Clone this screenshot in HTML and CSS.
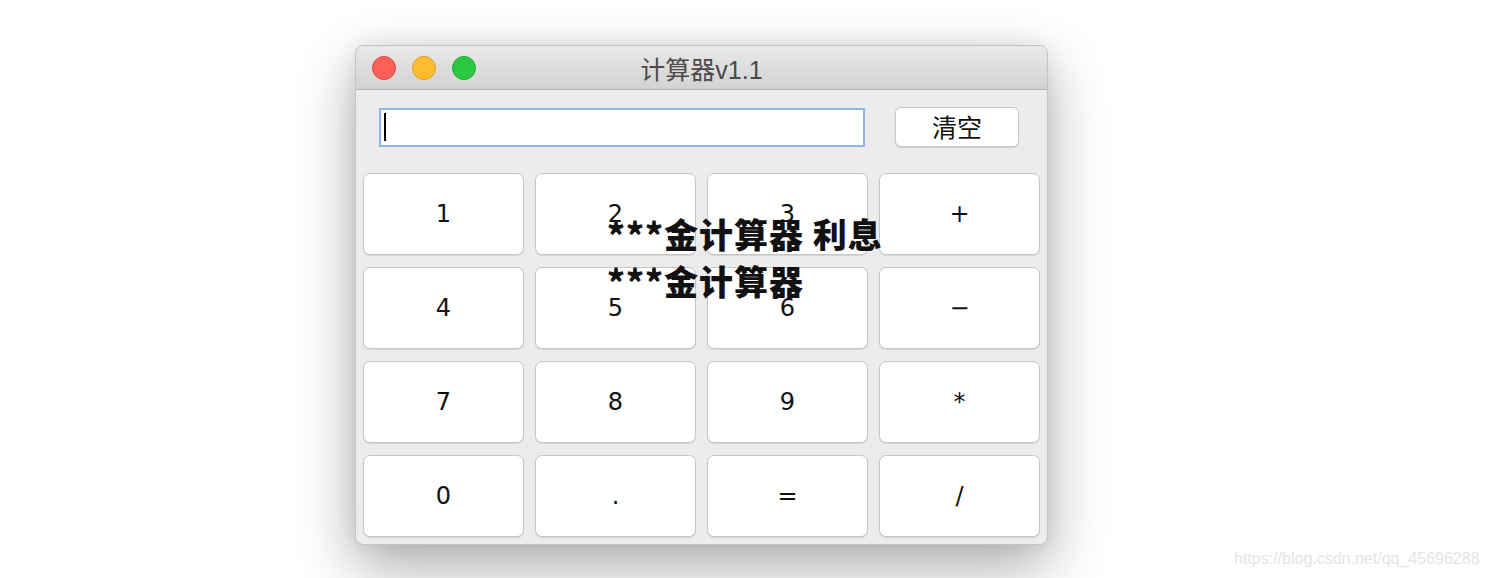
FILE: index.html
```html
<!DOCTYPE html>
<html lang="zh-CN">
<head>
  <meta charset="UTF-8" />
  <title>计算器v1.1</title>
  <link rel="stylesheet" href="styles.css">
</head>
<body>
  <div class="stage">
    <div class="window">
      <div class="titlebar">
        <div class="lights">
          <span class="light red"></span>
          <span class="light yellow"></span>
          <span class="light green"></span>
        </div>
        <div class="title">计算器v1.1</div>
      </div>
      <div class="content">
        <div class="toprow">
          <div class="display"><span class="caret"></span></div>
          <button class="clear">清空</button>
        </div>
        <div class="keys">
          <button class="key">1</button>
          <button class="key">2</button>
          <button class="key">3</button>
          <button class="key">+</button>
          <button class="key">4</button>
          <button class="key">5</button>
          <button class="key">6</button>
          <button class="key">&minus;</button>
          <button class="key">7</button>
          <button class="key">8</button>
          <button class="key">9</button>
          <button class="key">*</button>
          <button class="key">0</button>
          <button class="key">.</button>
          <button class="key">=</button>
          <button class="key">/</button>
        </div>
      </div>
    </div>
    <div class="caption">***金计算器 利息<br>***金计算器</div>
  </div>
  <div class="watermark">https://blog.csdn.net/qq_45696288</div>
</body>
</html>
```

FILE: styles.css
```css
* { box-sizing: border-box; margin: 0; padding: 0; }
html, body { width: 100%; height: 100%; overflow: hidden; }
body {
  background: #fff;
  font-family: "Liberation Sans", "Noto Sans CJK SC", sans-serif;
  position: relative;
}
.stage { position: relative; padding: 45px 0 0 355px; }
.window {
  width: 693px; height: 500px;
  background: #ececec;
  border: 1px solid #c4c4c4;
  border-radius: 8px;
  box-shadow: 0 22px 60px rgba(0, 0, 0, 0.33), 0 0 20px rgba(0, 0, 0, 0.08);
  overflow: hidden;
}
.titlebar {
  height: 44px;
  background: linear-gradient(#e9e9e9, #d2d2d2);
  border-bottom: 1px solid #b4b4b4;
  display: flex; align-items: center;
  position: relative;
}
.lights { display: flex; gap: 16px; padding-left: 16px; }
.light { width: 24px; height: 24px; border-radius: 50%; display: block; }
.red { background: #fe5f57; border: 1px solid #e0443e; }
.yellow { background: #febc2e; border: 1px solid #dea123; }
.green { background: #28c840; border: 1px solid #1aab29; }
.title {
  position: absolute; left: 0; right: 0; top: 0; bottom: 0;
  display: flex; justify-content: center; align-items: center;
  font-size: 25px; color: #4a4a4a;
  font-family: "Liberation Sans", "Noto Sans CJK SC", sans-serif;
}
.content { padding: 17px 7px 0 7px; }
.toprow { display: flex; align-items: center; padding-left: 16px; height: 40px; }
.display {
  width: 486px; height: 39px;
  background: #fff;
  border: 2px solid #8fb6e6;
  display: flex; align-items: center; padding-left: 3px;
}
.caret { width: 2px; height: 28px; background: #000; display: block; }
.clear {
  margin-left: 30px;
  width: 124px; height: 40px;
  background: #fff;
  border: 1px solid #c8c8c8;
  border-radius: 6px;
  box-shadow: 0 1px 1px rgba(0, 0, 0, 0.12);
  font-family: "Noto Sans CJK SC", sans-serif;
  font-size: 25px; color: #111;
  padding-bottom: 3px;
}
.keys {
  margin-top: 26px;
  display: grid;
  grid-template-columns: repeat(4, 161px);
  grid-auto-rows: 82px;
  column-gap: 11px; row-gap: 12px;
}
.key {
  background: #fff;
  border: 1px solid #c6c6c6;
  border-radius: 7px;
  box-shadow: 0 1px 1px rgba(0, 0, 0, 0.1);
  font-family: "DejaVu Sans", sans-serif;
  font-size: 24px; color: #111;
}
.caption {
  position: absolute; left: 607px; top: 210px;
  font-family: "Noto Sans CJK SC", sans-serif;
  font-weight: 900; font-size: 34px; line-height: 47px;
  letter-spacing: 1px;
  color: #111;
}
.watermark {
  position: absolute; left: 1234px; top: 550px;
  font-family: "Liberation Sans", sans-serif;
  font-size: 16px; color: #e4e4e4;
}
```
